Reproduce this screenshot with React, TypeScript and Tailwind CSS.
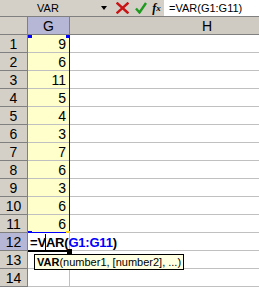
import React from 'react';

const values = [9, 6, 11, 5, 4, 3, 7, 6, 3, 6, 6];

const CancelIcon = () => (
  <svg width="13" height="12" viewBox="0 0 13 12">
    <path d="M1.5 1.5 L11.5 10.5 M11.5 1.5 L1.5 10.5" stroke="#c81414" strokeWidth="2.4" strokeLinecap="square" />
  </svg>
);

const EnterIcon = () => (
  <svg width="12" height="12" viewBox="0 0 12 12">
    <path d="M1 6.5 L4.5 10.5 L11 1" stroke="#1e9a1e" strokeWidth="2.4" fill="none" />
  </svg>
);

const RowHeader = ({ n, active }: { n: number; active?: boolean }) => (
  <div
    className={
      'w-[28px] shrink-0 flex items-center justify-center border-r border-b border-[#808080] text-[14px] leading-none ' +
      (active ? 'bg-[#b6b6d6]' : 'bg-[#d4d0c8]')
    }
  >
    {n}
  </div>
);

export default function App() {
  return (
    <div className="relative w-[259px] h-[289px] overflow-hidden bg-white text-black font-['Liberation_Sans',Arial,sans-serif]">
      {/* formula bar */}
      <div className="flex h-[17px] bg-[#d4d0c8] border-b border-[#808080]">
        <div className="w-[96px] flex items-center justify-center text-[11px] leading-none">VAR</div>
        <div className="w-[16px] flex items-center justify-center">
          <div className="w-0 h-0 border-l-[3.5px] border-r-[3.5px] border-t-[4px] border-l-transparent border-r-transparent border-t-black" />
        </div>
        <div className="w-[20px] flex items-center justify-center">
          <CancelIcon />
        </div>
        <div className="w-[17px] flex items-center justify-center">
          <EnterIcon />
        </div>
        <div className="w-[15px] flex items-center justify-center font-['Liberation_Serif',serif] italic font-bold text-[12px] leading-none">
          f<span className="text-[9px]">x</span>
        </div>
        <div className="flex-1 bg-white flex items-center pl-[5px] text-[11px] leading-none whitespace-nowrap">
          =VAR(G1:G11)
        </div>
      </div>

      {/* column headers */}
      <div className="flex h-[18px]">
        <div className="w-[28px] shrink-0 bg-[#d4d0c8] border-r border-b border-[#808080]" />
        <div className="w-[42px] shrink-0 bg-[#b6b6d6] border-r border-b border-[#808080] flex items-center justify-center text-[14px] leading-none">
          G
        </div>
        <div className="w-[274px] shrink-0 bg-[#cfcbc3] border-b border-[#808080] flex items-center justify-center text-[14px] leading-none">
          H
        </div>
      </div>

      {/* rows */}
      {Array.from({ length: 14 }, (_, i) => {
        const n = i + 1;
        const v = values[i];
        return (
          <div key={n} className="flex h-[18px]">
            <RowHeader n={n} active={n === 12} />
            <div
              className={
                'w-[42px] shrink-0 border-b border-r border-[#c0c0c0] flex items-center justify-end pr-[3px] text-[14px] leading-none ' +
                (v !== undefined ? 'bg-[#ffffcc]' : 'bg-white')
              }
            >
              {v}
            </div>
            <div className="flex-1 border-b border-[#c0c0c0]" />
          </div>
        );
      })}

      {/* range highlight G1:G11 */}
      <div className="absolute left-[28px] top-[35px] w-[42px] h-[198px] border-r border-b border-[#0000ff]" />
      <div className="absolute left-[28px] top-[35px] w-[4px] h-[3px] bg-[#0000ff]" />
      <div className="absolute left-[66px] top-[35px] w-[4px] h-[3px] bg-[#0000ff]" />
      <div className="absolute left-[28px] top-[231px] w-[4px] h-[2px] bg-[#0000ff]" />
      <div className="absolute left-[66px] top-[231px] w-[4px] h-[2px] bg-[#ffd21e]" />

      {/* active cell G12 */}
      <div className="absolute left-[28px] top-[250px] w-[42px] h-[2px] bg-black" />
      <div className="absolute left-[67px] top-[249px] w-[5px] h-[5px] bg-black" />

      {/* edited text in G12 */}
      <div className="absolute left-[30px] top-[233px] h-[18px] flex items-center text-[13px] font-bold leading-none tracking-[-0.2px] whitespace-nowrap">
        <span>=V</span>
        <span className="inline-block w-px h-[16px] bg-black mx-[-0.5px]" />
        <span>AR(</span>
        <span className="text-[#0000ff]">G1:G11</span>
        <span>)</span>
      </div>

      {/* argument tooltip */}
      <div className="absolute left-[34px] top-[254px] h-[16px] px-[2px] flex items-center bg-[#ffffe1] border border-black text-[11px] leading-none whitespace-nowrap">
        <span className="font-bold">VAR</span>
        <span>(number1, [number2], ...)</span>
      </div>
    </div>
  );
}
